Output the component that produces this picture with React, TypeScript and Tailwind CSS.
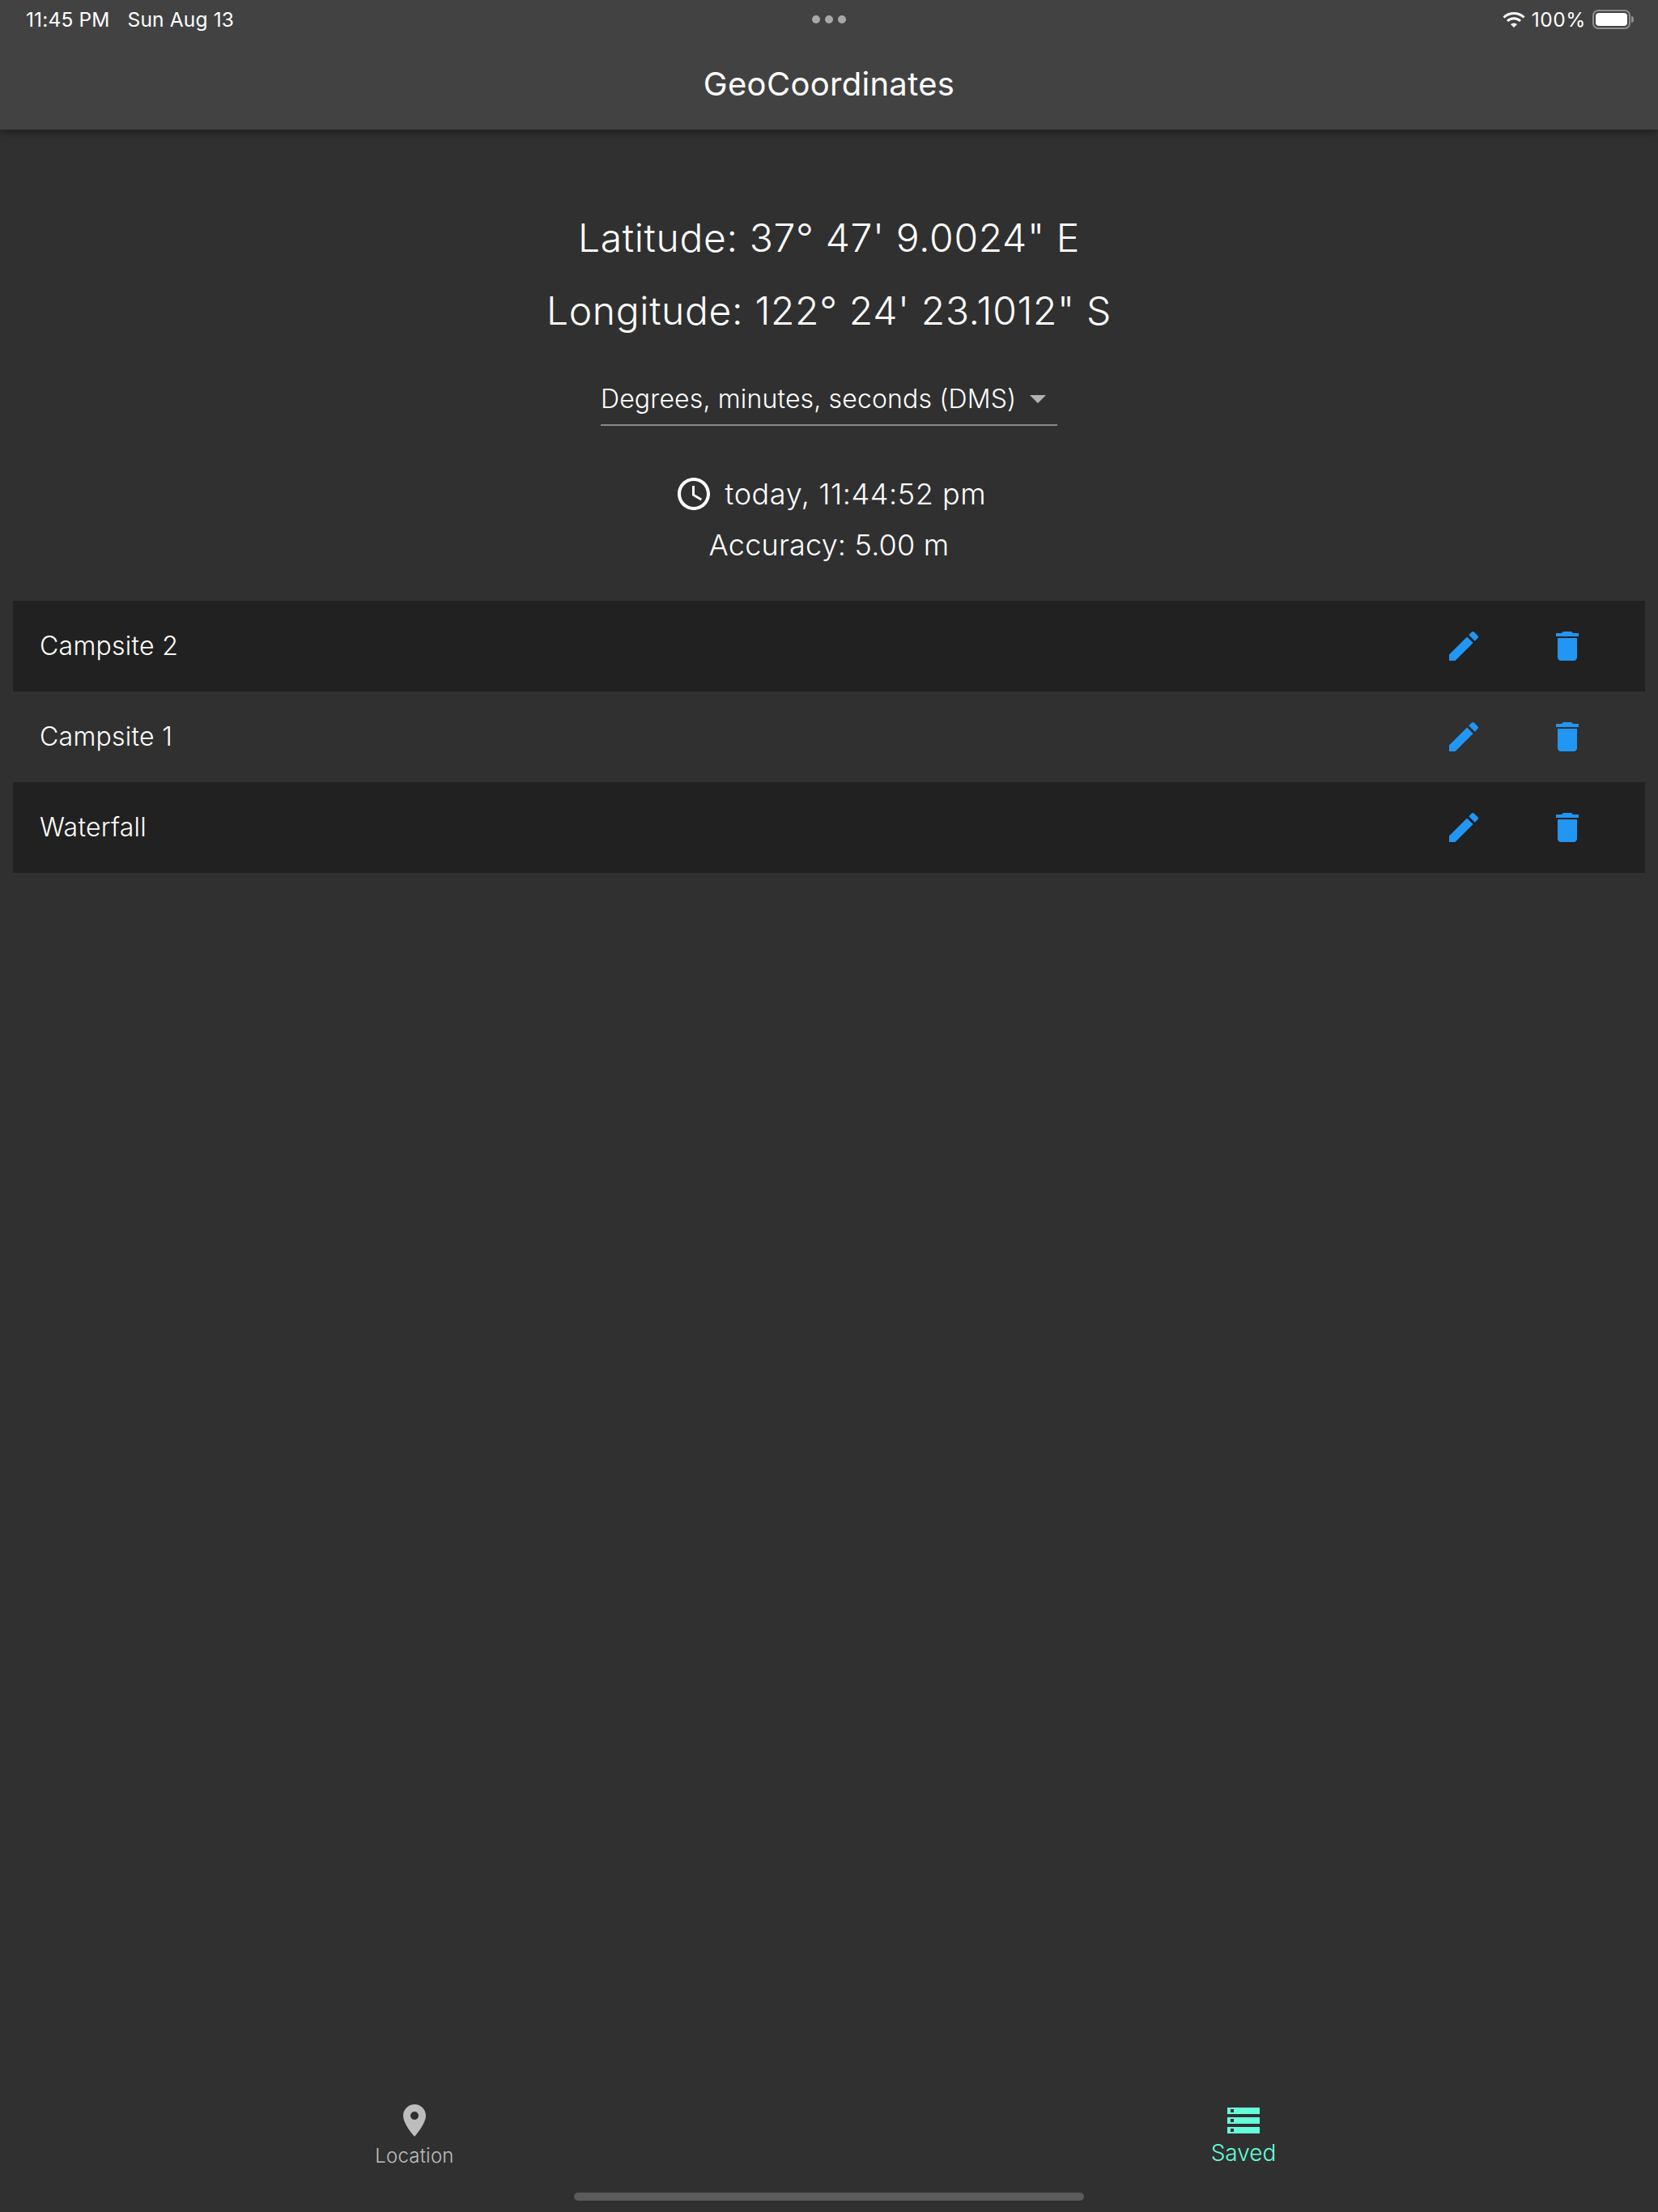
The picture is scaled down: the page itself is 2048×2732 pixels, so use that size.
import React from 'react';

const SAVED = ['Campsite 2', 'Campsite 1', 'Waterfall'];

const EDIT = 'M3 17.25V21h3.75L17.81 9.94l-3.75-3.75L3 17.25zM20.71 7.04c.39-.39.39-1.02 0-1.41l-2.34-2.34c-.39-.39-1.02-.39-1.41 0l-1.83 1.83 3.75 3.75 1.83-1.83z';
const TRASH = 'M6 19c0 1.1.9 2 2 2h8c1.1 0 2-.9 2-2V7H6v12zM19 4h-3.5l-1-1h-5l-1 1H5v2h14V4z';
const PIN = 'M12 2C8.13 2 5 5.13 5 9c0 5.25 7 13 7 13s7-7.75 7-13c0-3.87-3.13-7-7-7zm0 9.5c-1.38 0-2.5-1.12-2.5-2.5s1.12-2.5 2.5-2.5 2.5 1.12 2.5 2.5-1.12 2.5-2.5 2.5z';
const STORAGE = 'M2 20h20v-4H2v4zm2-3h2v2H4v-2zM2 4v4h20V4H2zm4 3H4V5h2v2zm-4 7h20v-4H2v4zm2-3h2v2H4v-2z';
const CLOCK = 'M11.99 2C6.47 2 2 6.48 2 12s4.47 10 9.99 10C17.52 22 22 17.52 22 12S17.52 2 11.99 2zM12 20c-4.42 0-8-3.58-8-8s3.58-8 8-8 8 3.58 8 8-3.58 8-8 8zm.5-13H11v6l5.25 3.15.75-1.23-4.5-2.67z';

const Icon = ({ d, className }: { d: string; className: string }) => (
  <svg viewBox="0 0 24 24" fill="currentColor" className={className}>
    <path d={d} />
  </svg>
);

const StatusBar = () => (
  <div className="relative h-[48px] flex items-center justify-between pl-[32px] pr-[30px] text-[24.5px] tracking-[0.15px] text-white">
    <div className="flex gap-[22px]">
      <span>11:45 PM</span>
      <span>Sun Aug 13</span>
    </div>
    <div className="absolute left-[1003px] top-[19px] flex gap-[6px]">
      <span className="w-[10px] h-[10px] rounded-full bg-[#a8a8a8]" />
      <span className="w-[10px] h-[10px] rounded-full bg-[#a8a8a8]" />
      <span className="w-[10px] h-[10px] rounded-full bg-[#a8a8a8]" />
    </div>
    <div className="flex items-center gap-[8px]">
      <svg viewBox="0 0 28 20" className="w-[28px] h-[20px]" fill="none" stroke="white" strokeWidth="3">
        <path d="M1.5 7.5a18 18 0 0 1 25 0" />
        <path d="M6 12a11.5 11.5 0 0 1 16 0" />
        <path d="M14 20l-4-4a6 6 0 0 1 8 0z" fill="white" stroke="none" />
      </svg>
      <span className="tracking-[0.6px]">100%</span>
      <div className="flex items-center gap-[1px]">
        <div className="w-[47px] h-[24px] rounded-[7px] border-2 border-[#8f8f8f] p-[2px]">
          <div className="w-full h-full rounded-[4px] bg-white" />
        </div>
        <div className="w-[3px] h-[8px] rounded-r-full bg-[#8f8f8f]" />
      </div>
    </div>
  </div>
);

export default function App() {
  return (
    <div className="relative w-[2048px] h-[2732px] flex flex-col bg-[#303030] text-white font-['Inter',sans-serif]">
      <header className="relative z-10 h-[160px] bg-[#424242] shadow-[0_4px_10px_rgba(0,0,0,0.35)]">
        <StatusBar />
        <h1 className="mt-[32px] text-center text-[40px] leading-[48px] font-normal tracking-[0.3px]">GeoCoordinates</h1>
      </header>

      <section className="pt-[89px] flex flex-col items-center font-light">
        <p className="text-[48px] leading-[90px] tracking-[0.65px]">Latitude: 37° 47' 9.0024" E</p>
        <p className="text-[48px] leading-[90px] tracking-[0.65px]">Longitude: 122° 24' 23.1012" S</p>
        <div className="mt-[31px] w-[564px] h-[66px] flex items-center justify-between border-b-2 border-[#8a8a8a] pt-[2px]">
          <span className="text-[32px] leading-[48px] tracking-[0.15px]">Degrees, minutes, seconds (DMS)</span>
          <span className="mr-[14px] w-0 h-0 border-x-[10px] border-x-transparent border-t-[10px] border-t-[#b3b3b3]" />
        </div>
        <div className="mt-[60px] flex items-center gap-[15px] h-[48px] ml-[3px]">
          <Icon d={CLOCK} className="w-[48px] h-[48px]" />
          <span className="text-[36px] tracking-[0.6px]">today, 11:44:52 pm</span>
        </div>
        <p className="mt-[15px] text-[36px] leading-[48px] tracking-[0.2px]">Accuracy: 5.00 m</p>
      </section>

      <ul className="mt-[45px] mx-[16px] flex-1 font-light">
        {SAVED.map((name, i) => (
          <li key={name} className={`h-[112px] flex items-center pl-[33px] ${i % 2 === 0 ? 'bg-[#212121]' : ''}`}>
            <span className="flex-1 text-[32px] tracking-[0.25px]">{name}</span>
            <Icon d={EDIT} className="w-[48px] h-[48px] text-[#2196f3]" />
            <Icon d={TRASH} className="ml-[80px] mr-[72px] w-[48px] h-[48px] text-[#2196f3]" />
          </li>
        ))}
      </ul>

      <nav className="h-[137px] flex font-light">
        <div className="flex-1 flex flex-col items-center text-[#bdbdbd]">
          <Icon d={PIN} className="w-[48px] h-[48px]" />
          <span className="mt-[4px] text-[24px] leading-[32px] tracking-[0.2px]">Location</span>
        </div>
        <div className="flex-1 flex flex-col items-center text-[#64ffda]">
          <Icon d={STORAGE} className="w-[48px] h-[48px]" />
          <span className="-mt-[2px] text-[28px] leading-[36px]">Saved</span>
        </div>
      </nav>

      <div className="absolute left-[709px] top-[2708px] w-[630px] h-[10px] rounded-full bg-[#5b5b5b]" />
    </div>
  );
}
